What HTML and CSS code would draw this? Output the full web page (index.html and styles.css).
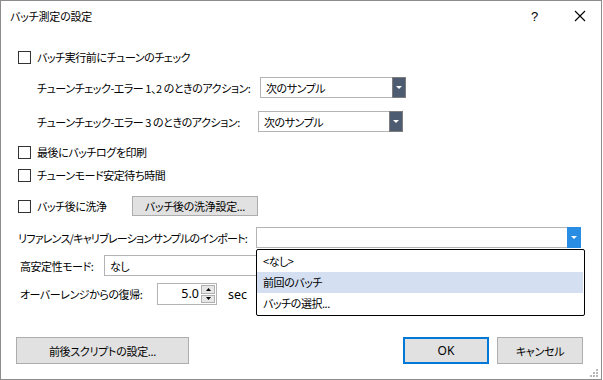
FILE: index.html
```html
<!DOCTYPE html>
<html lang="ja">
<head>
<meta charset="utf-8">
<title>バッチ測定の設定</title>
<link rel="stylesheet" href="styles.css">
</head>
<body>
<div class="window">
  <div class="titlebar">
    <span class="title">バッチ測定の設定</span>
    <span class="help">?</span>
    <span class="close"><svg width="12" height="12" viewBox="0 0 12 12"><path d="M1 1 L11 11 M11 1 L1 11" stroke="#000" stroke-width="1.1" fill="none"/></svg></span>
  </div>
  <div class="content">
    <div class="row r1"><span class="cb"></span><span class="cblabel">バッチ実行前にチューンのチェック</span></div>
    <div class="row r2"><span class="lbl lbl-a">チューンチェック-エラー 1、2 のときのアクション:</span>
      <div class="combo combo-a"><span class="ctext">次のサンプル</span><span class="arrow dark"><svg width="6" height="4" viewBox="0 0 6 4"><path d="M0 0 H6 L3 3 Z" fill="#fff"/></svg></span></div>
    </div>
    <div class="row r3"><span class="lbl lbl-b">チューンチェック-エラー 3 のときのアクション:</span>
      <div class="combo combo-b"><span class="ctext">次のサンプル</span><span class="arrow dark"><svg width="6" height="4" viewBox="0 0 6 4"><path d="M0 0 H6 L3 3 Z" fill="#fff"/></svg></span></div>
    </div>
    <div class="row r4"><span class="cb"></span><span class="cblabel">最後にバッチログを印刷</span></div>
    <div class="row r5"><span class="cb"></span><span class="cblabel">チューンモード安定待ち時間</span></div>
    <div class="row r6"><span class="cb"></span><span class="cblabel wash">バッチ後に洗浄</span><button class="btn btn-wash">バッチ後の洗浄設定...</button></div>
    <div class="row r7"><span class="lbl lbl-c">リファレンス/キャリブレーションサンプルのインポート:</span>
      <div class="combo combo-c"><span class="ctext"></span><span class="arrow blue"><svg width="6" height="4" viewBox="0 0 6 4"><path d="M0 0 H6 L3 3 Z" fill="#fff"/></svg></span></div>
    </div>
    <div class="row r8"><span class="lbl lbl-d">高安定性モード:</span>
      <div class="textbox"><span class="ctext">なし</span></div>
    </div>
    <div class="row r9"><span class="lbl lbl-e">オーバーレンジからの復帰:</span>
      <div class="spin"><span class="spinval">5.0</span>
        <span class="spinbtns">
          <span class="sb"><svg width="5" height="3" viewBox="0 0 5 3"><path d="M0 3 H5 L2.5 0 Z" fill="#000"/></svg></span>
          <span class="sb"><svg width="5" height="3" viewBox="0 0 5 3"><path d="M0 0 H5 L2.5 3 Z" fill="#000"/></svg></span>
        </span>
      </div>
      <span class="unit">sec</span>
    </div>
  </div>
  <div class="footer">
    <button class="btn btn-script">前後スクリプトの設定...</button>
    <span class="spacer"></span>
    <button class="btn btn-ok">OK</button>
    <button class="btn btn-cancel">キャンセル</button>
  </div>
  <div class="popup">
    <div class="item">&lt;なし&gt;</div>
    <div class="item sel">前回のバッチ</div>
    <div class="item">バッチの選択...</div>
  </div>
  <svg class="grip" width="9" height="9" viewBox="0 0 9 9">
    <rect x="6" y="0" width="2" height="2" fill="#b8b8b8"/>
    <rect x="3" y="3" width="2" height="2" fill="#b8b8b8"/>
    <rect x="6" y="3" width="2" height="2" fill="#b8b8b8"/>
    <rect x="0" y="6" width="2" height="2" fill="#b8b8b8"/>
    <rect x="3" y="6" width="2" height="2" fill="#b8b8b8"/>
    <rect x="6" y="6" width="2" height="2" fill="#b8b8b8"/>
  </svg>
</div>
</body>
</html>
```
FILE: styles.css
```css
* { box-sizing: border-box; }
html, body { margin: 0; padding: 0; background: #fff; }
body {
  font-family: "Noto Sans CJK JP", "Noto Sans", sans-serif;
  font-size: 11px;
  letter-spacing: -0.45px;
  font-feature-settings: "palt";
  color: #000;
}
.window {
  position: relative;
  width: 602px;
  height: 380px;
  border: 1px solid #8c8c8c;
  background: #fff;
  display: flex;
  flex-direction: column;
}
.titlebar {
  height: 30px;
  display: flex;
  align-items: center;
  padding-left: 9px;
}
.title { flex: 1; letter-spacing: -0.2px; }
.help { width: 10px; margin-right: 33px; font-family: "Liberation Sans", sans-serif; font-size: 13px; letter-spacing: 0; }
.close { width: 12px; height: 12px; margin-right: 15px; display: flex; }
.content { display: flex; flex-direction: column; padding-left: 17px; }
.row { display: flex; align-items: center; }
.r1 { height: 22px; margin-top: 15px; }
.r2 { height: 21px; margin-top: 9px; }
.r3 { height: 21px; margin-top: 13px; }
.r4 { height: 22px; margin-top: 9px; }
.r5 { height: 22px; margin-top: 1px; }
.r6 { height: 20px; margin-top: 10px; }
.r7 { height: 21px; margin-top: 11px; }
.r8 { height: 21px; margin-top: 7px; }
.r9 { height: 22px; margin-top: 7px; }
.cb {
  width: 13px; height: 13px;
  border: 1px solid #333;
  background: #fff;
  flex: none;
}
.cblabel { margin-left: 6px; white-space: nowrap; }
.wash { width: 95px; }
.lbl { white-space: nowrap; flex: none; }
.lbl-a { padding-left: 19px; width: 242px; }
.lbl-b { width: 240px; padding-left: 19px; }
.lbl-c { width: 238px; letter-spacing: -0.78px; }
.lbl-d { width: 86px; padding-left: 2px; }
.lbl-e { width: 139px; padding-left: 2px; }
.combo, .textbox, .spin {
  display: flex;
  align-items: stretch;
  border: 1px solid #b4b4b4;
  background: #fff;
  height: 100%;
}
.combo-a { width: 146px; }
.combo-b { width: 145px; }
.combo-c { width: 325px; }
.textbox { width: 477px; }
.ctext { flex: 1; padding-left: 5px; display: flex; align-items: center; white-space: nowrap; }
.arrow {
  width: 14px; flex: none;
  display: flex; align-items: center; justify-content: center;
  margin: -1px -1px -1px 0;
}
.arrow.dark { background: #4e5c72; border: 1px solid #7d7d7d; }
.arrow.blue { background: #2a8de4; }
.spin { width: 60px; height: 22px; }
.spinval { flex: 1; text-align: right; padding-right: 2px; line-height: 20px; font-family: "Noto Sans", sans-serif; font-size: 12.5px; letter-spacing: 0; }
.spinbtns { width: 15px; display: flex; flex-direction: column; padding: 1px 1px 1px 0; gap: 1px; }
.sb { flex: 1; background: #e6e6e6; border: 1px solid #b0b0b0; display: flex; align-items: center; justify-content: center; }
.unit { margin-left: 11px; font-family: "Noto Sans", sans-serif; font-size: 12.5px; letter-spacing: 0; }
.btn {
  font-family: inherit;
  font-size: 11px;
  letter-spacing: -0.3px;
  font-feature-settings: "palt";
  color: #000;
  background: #e1e1e1;
  border: 1px solid #adadad;
  padding: 0;
  margin: 0;
  height: 100%;
}
.btn-wash { width: 126px; }
.footer {
  margin-top: auto;
  margin-bottom: 15px;
  height: 27px;
  display: flex;
  padding-left: 15px;
  padding-right: 18px;
}
.btn-script { width: 173px; }
.spacer { flex: 1; }
.btn-ok { width: 86px; border: 2px solid #0078d7; margin-right: 8px; font-family: "Noto Sans", sans-serif; font-size: 12px; letter-spacing: 0; }
.btn-cancel { width: 86px; }
.popup {
  position: absolute;
  left: 255px;
  top: 248px;
  width: 329px;
  height: 67px;
  border: 1px solid #000;
  border-radius: 2px;
  background: #fff;
  padding-top: 1px;
}
.item { height: 21px; line-height: 21px; padding-left: 6px; margin-right: 1px; }
.item.sel { background: #d4dff1; }
.grip { position: absolute; right: 2px; bottom: 1px; }
```
